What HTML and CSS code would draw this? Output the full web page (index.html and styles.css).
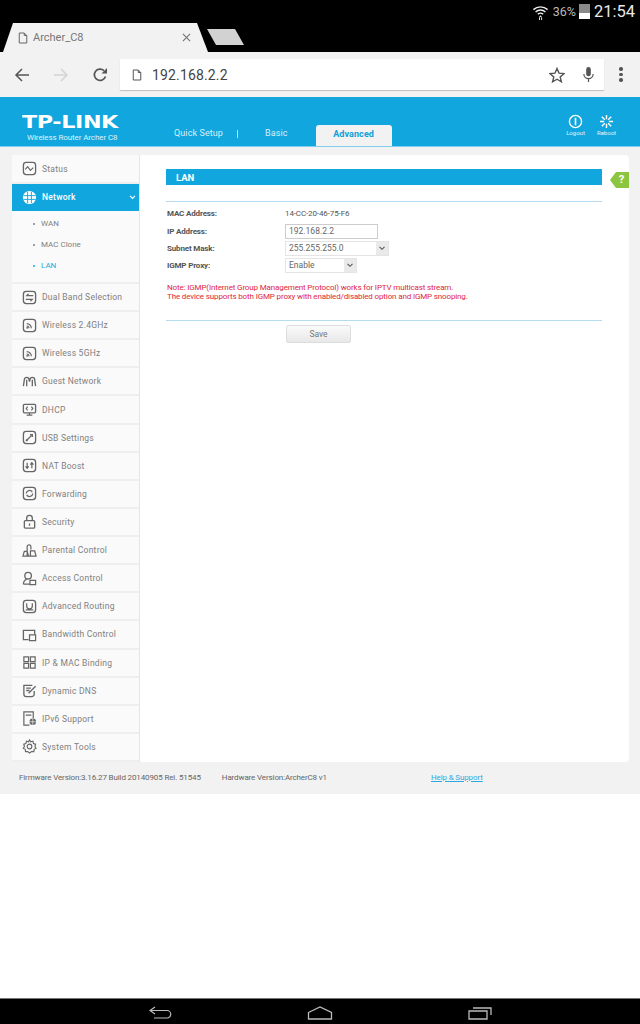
FILE: index.html
```html
<!DOCTYPE html>
<html lang="en">
<head>
<meta charset="utf-8">
<title>Archer_C8</title>
<link rel="stylesheet" href="styles.css">
</head>
<body>
<svg class="defs" width="0" height="0" aria-hidden="true">
  <symbol id="box" viewBox="0 0 16 16"><rect x="1.5" y="1.5" width="13" height="13" rx="3" fill="none" stroke="currentColor" stroke-width="1.4"/></symbol>
</svg>
<div class="phone">
  <header class="chrome-top">
    <div class="status">
      <svg class="wifi" viewBox="0 0 18 18" width="17" height="18"><path d="M1.5 6.500a11 11 0 0 1 15 0M3.800 9a7.600 7.600 0 0 1 10.400 0M6.200 11.400a4 4 0 0 1 5.600 0" fill="none" stroke="#eee" stroke-width="1.500"/><path d="M9 12.500l1.500 1.700H7.500zM7.400 14.500v3h1v-3zM9.700 14.500v3h1v-3z" fill="#eee"/></svg>
      <span class="pct">36%</span>
      <span class="batt"><span class="batt-fill"></span></span>
      <span class="clock">21:54</span>
    </div>
    <div class="tabs">
      <div class="tab">
        <svg class="doc" viewBox="0 0 12 14" width="10" height="12"><path d="M1.500 1h6l3 3v9h-9zM7.500 1v3h3" fill="none" stroke="#666" stroke-width="1.200"/></svg>
        <span class="tab-title">Archer_C8</span>
        <svg class="tab-x" viewBox="0 0 10 10" width="9" height="9"><path d="M1 1l8 8M9 1l-8 8" stroke="#777" stroke-width="1.300"/></svg>
      </div>
      <div class="newtab"></div>
    </div>
  </header>

  <div class="toolbar">
    <svg class="tb-ic" viewBox="0 0 16 16" width="16" height="16"><path d="M15 8H2M8 2L2 8l6 6" fill="none" stroke="#555" stroke-width="1.500"/></svg>
    <svg class="tb-ic" viewBox="0 0 16 16" width="16" height="16"><path d="M1 8h13M8 2l6 6-6 6" fill="none" stroke="#d4d4d4" stroke-width="1.500"/></svg>
    <svg class="tb-ic" viewBox="0 0 16 16" width="16" height="16"><path d="M13.500 9.500A5.700 5.700 0 1 1 12 3.600" fill="none" stroke="#555" stroke-width="1.700"/><path d="M9.500 6.500h5.500v-5.500z" fill="#555"/></svg>
    <div class="omnibox">
      <svg viewBox="0 0 12 14" width="10" height="12"><path d="M1.500 1h6l3 3v9h-9zM7.500 1v3h3" fill="none" stroke="#555" stroke-width="1.200"/></svg>
      <span class="url">192.168.2.2</span>
      <svg class="star" viewBox="0 0 16 16" width="16" height="16"><path d="M8 1.500l2 4.600 5 .5-3.800 3.300 1.200 4.900L8 12.200l-4.400 2.600 1.200-4.900L1 6.600l5-.5z" fill="none" stroke="#555" stroke-width="1.400"/></svg>
      <svg class="mic" viewBox="0 0 14 18" width="13" height="17"><rect x="4.500" y="1" width="5" height="10" rx="2.500" fill="#555"/><path d="M2 8.500a5 5 0 0 0 10 0M7 13.500V17" fill="none" stroke="#555" stroke-width="1.300"/></svg>
    </div>
    <div class="menu-dots"><i></i><i></i><i></i></div>
  </div>

  <div class="page">
    <div class="rt-head">
      <div class="brand">
        <span class="logo">TP-LINK</span>
        <span class="model">Wireless Router Archer C8</span>
      </div>
      <nav class="rt-tabs">
        <span class="rt-tab">Quick Setup</span>
        <span class="rt-sep"></span>
        <span class="rt-tab basic">Basic</span>
        <span class="rt-tab active">Advanced</span>
      </nav>
      <div class="rt-actions">
        <div class="rt-act">
          <svg viewBox="0 0 16 16" width="15" height="15"><circle cx="8" cy="8" r="6.500" fill="none" stroke="#fff" stroke-width="1.500"/><path d="M8 4v8" stroke="#fff" stroke-width="1.700"/></svg>
          <span>Logout</span>
        </div>
        <div class="rt-act">
          <svg viewBox="0 0 16 16" width="15" height="15"><path d="M8 1v4.500M8 10.500V15M1 8h4.500M10.500 8H15M3 3l3.200 3.200M9.800 9.800L13 13M13 3L9.800 6.200M6.200 9.800L3 13" stroke="#fff" stroke-width="1.500"/></svg>
          <span>Reboot</span>
        </div>
      </div>
    </div>

    <div class="rt-body">
      <aside class="side">
        <div class="item first">
          <svg class="ic" viewBox="0 0 16 16"><use href="#box"/><path d="M3.500 9l2.500-3 3 4 3-3" fill="none" stroke="currentColor" stroke-width="1.200"/></svg>
          <span>Status</span>
        </div>
        <div class="item on">
          <svg class="ic" viewBox="0 0 16 16"><circle cx="8" cy="8" r="7" fill="#fff"/><path d="M1.500 6h13M1.500 10h13M6 2v12M10 2v12" stroke="#11a6de" stroke-width="1"/></svg>
          <span>Network</span>
          <svg class="chev" viewBox="0 0 8 6" width="7" height="5"><path d="M1 1l3 3 3-3" fill="none" stroke="#fff" stroke-width="1.500"/></svg>
        </div>
        <ul class="sub">
          <li>WAN</li>
          <li>MAC Clone</li>
          <li class="cur">LAN</li>
        </ul>
        <div class="rows">
          <div class="item">
            <svg class="ic" viewBox="0 0 16 16"><use href="#box"/><path d="M12 6H5l2-2M4 10h7l-2 2" fill="none" stroke="currentColor" stroke-width="1.200"/></svg>
            <span>Dual Band Selection</span>
          </div>
          <div class="item">
            <svg class="ic" viewBox="0 0 16 16"><use href="#box"/><path d="M5 6a5 5 0 0 1 5 5M5 8.500A2.500 2.500 0 0 1 7.500 11" fill="none" stroke="currentColor" stroke-width="1.200"/><circle cx="5.500" cy="10.500" r="1" fill="currentColor"/></svg>
            <span>Wireless 2.4GHz</span>
          </div>
          <div class="item">
            <svg class="ic" viewBox="0 0 16 16"><use href="#box"/><path d="M5 6a5 5 0 0 1 5 5M5 8.500A2.500 2.500 0 0 1 7.500 11" fill="none" stroke="currentColor" stroke-width="1.200"/><circle cx="5.500" cy="10.500" r="1" fill="currentColor"/></svg>
            <span>Wireless 5GHz</span>
          </div>
          <div class="item">
            <svg class="ic" viewBox="0 0 16 16"><path d="M1.500 13l1-7a2.500 2.500 0 0 1 5 0l.5 2 .5-2a2.500 2.500 0 0 1 5 0l1 7M5 6v7M11 6v7" fill="none" stroke="currentColor" stroke-width="1.400"/></svg>
            <span>Guest Network</span>
          </div>
          <div class="item">
            <svg class="ic" viewBox="0 0 16 16"><rect x="1.500" y="2.500" width="13" height="9" rx="1" fill="none" stroke="currentColor" stroke-width="1.400"/><path d="M5 14h6M8 11.500V14M6 5L4.500 7 6 9M10 5l1.500 2L10 9" fill="none" stroke="currentColor" stroke-width="1.200"/></svg>
            <span>DHCP</span>
          </div>
          <div class="item">
            <svg class="ic" viewBox="0 0 16 16"><use href="#box"/><path d="M5 11l5-5M8.500 5H11v2.500" fill="none" stroke="currentColor" stroke-width="1.400"/><circle cx="5" cy="11" r="1.200" fill="currentColor"/></svg>
            <span>USB Settings</span>
          </div>
          <div class="item">
            <svg class="ic" viewBox="0 0 16 16"><use href="#box"/><path d="M5.500 5v6M3.800 9l1.700 2 1.700-2M10.500 11V5M8.800 7l1.700-2 1.700 2" fill="none" stroke="currentColor" stroke-width="1.300"/></svg>
            <span>NAT Boost</span>
          </div>
          <div class="item">
            <svg class="ic" viewBox="0 0 16 16"><use href="#box"/><path d="M4.500 8A3.500 3.500 0 0 1 11 6.500M11.500 8A3.500 3.500 0 0 1 5 9.500" fill="none" stroke="currentColor" stroke-width="1.300"/></svg>
            <span>Forwarding</span>
          </div>
          <div class="item">
            <svg class="ic" viewBox="0 0 16 16"><rect x="2.500" y="7" width="11" height="8" rx="1" fill="none" stroke="currentColor" stroke-width="1.400"/><path d="M5 7V4.500a3 3 0 0 1 6 0V7M8 10v2.500" fill="none" stroke="currentColor" stroke-width="1.400"/></svg>
            <span>Security</span>
          </div>
          <div class="item">
            <svg class="ic" viewBox="0 0 16 16"><path d="M1 14l1.500-5h3L7 14zM5.500 14V4a2 2 0 0 1 4 0v3M9 14V8.500h4.500L15 14zM1 14h14" fill="none" stroke="currentColor" stroke-width="1.300"/></svg>
            <span>Parental Control</span>
          </div>
          <div class="item">
            <svg class="ic" viewBox="0 0 16 16"><circle cx="6.500" cy="5" r="3.500" fill="none" stroke="currentColor" stroke-width="1.400"/><path d="M1.500 14c0-3 2-4.500 3.500-5M8 14H1.500M8.500 10h6v4.500h-6z" fill="none" stroke="currentColor" stroke-width="1.300"/></svg>
            <span>Access Control</span>
          </div>
          <div class="item">
            <svg class="ic" viewBox="0 0 16 16"><use href="#box"/><path d="M5 4.500v3a3 3 0 0 0 6 0v-3M4 11.500h8" fill="none" stroke="currentColor" stroke-width="1.300"/></svg>
            <span>Advanced Routing</span>
          </div>
          <div class="item">
            <svg class="ic" viewBox="0 0 16 16"><path d="M7 13.500H1.500v-10h12V8" fill="none" stroke="currentColor" stroke-width="1.400"/><path d="M8 8.500h6.500v6H8z" fill="none" stroke="currentColor" stroke-width="1.300"/></svg>
            <span>Bandwidth Control</span>
          </div>
          <div class="item">
            <svg class="ic" viewBox="0 0 16 16"><path d="M2 2h5v5H2zM9 2h5v5H9zM2 9h5v5H2zM9 9h5v5H9z" fill="none" stroke="currentColor" stroke-width="1.300"/></svg>
            <span>IP &amp; MAC Binding</span>
          </div>
          <div class="item">
            <svg class="ic" viewBox="0 0 16 16"><path d="M13 8.500v3.500a2.500 2.500 0 0 1-2.500 2.500H4.500A2.500 2.500 0 0 1 2 12V2.500h9M4.500 5.500h5M4.500 8h3.500M7 11l7.500-7.500" fill="none" stroke="currentColor" stroke-width="1.400"/></svg>
            <span>Dynamic DNS</span>
          </div>
          <div class="item">
            <svg class="ic" viewBox="0 0 16 16"><path d="M8 15H2V1h10v7M4 4.500h6" fill="none" stroke="currentColor" stroke-width="1.300"/><circle cx="11.500" cy="11.500" r="3.500" fill="currentColor"/><path d="M8 11.500h7M11.500 8v7" stroke="#fafafa" stroke-width=".7"/></svg>
            <span>IPv6 Support</span>
          </div>
          <div class="item">
            <svg class="ic" viewBox="0 0 16 16"><path d="M8 1l1.400 2 2.300-.6.500 2.400 2.300.7-.7 2.500 1.200 2-2 1-.4 2.500-2.400-.2L8 15l-1.800-1.700-2.400.2-.4-2.500-2-1 1.200-2-.7-2.500 2.300-.7.500-2.400 2.300.6z" fill="none" stroke="currentColor" stroke-width="1.200"/><circle cx="8" cy="8" r="2.500" fill="none" stroke="currentColor" stroke-width="1.200"/></svg>
            <span>System Tools</span>
          </div>
        </div>
      </aside>

      <main class="content">
        <div class="title-row">
          <h1 class="title">LAN</h1>
          <div class="help">?</div>
        </div>
        <div class="rule top"></div>
        <div class="form">
          <div class="frow mac"><label>MAC Address:</label><span class="val">14-CC-20-46-75-F6</span></div>
          <div class="frow"><label>IP Address:</label><span class="input">192.168.2.2</span></div>
          <div class="frow"><label>Subnet Mask:</label><span class="select wide">255.255.255.0<b class="sel-btn"><svg viewBox="0 0 8 6" width="8" height="5"><path d="M1 1l3 3 3-3" fill="none" stroke="#555" stroke-width="1.300"/></svg></b></span></div>
          <div class="frow"><label>IGMP Proxy:</label><span class="select narrow">Enable<b class="sel-btn"><svg viewBox="0 0 8 6" width="8" height="5"><path d="M1 1l3 3 3-3" fill="none" stroke="#555" stroke-width="1.300"/></svg></b></span></div>
        </div>
        <p class="note">Note: IGMP(Internet Group Management Protocol) works for IPTV multicast stream.<br>The device supports both IGMP proxy with enabled/disabled option and IGMP snooping.</p>
        <div class="rule bottom"></div>
        <div class="actions"><span class="save">Save</span></div>
      </main>
    </div>

    <footer class="rt-foot">
      <span class="fw">Firmware Version:3.16.27 Build 20140905 Rel. 51545</span>
      <span class="hw">Hardware Version:ArcherC8 v1</span>
      <a class="support" href="#">Help &amp; Support</a>
    </footer>
  </div>

  <div class="blank"></div>

  <div class="navbar">
    <svg viewBox="0 0 24 14" width="24" height="14"><path d="M7 1L2 4.500 7 8M2 4.500h17a3.500 3.500 0 0 1 0 7.500H6" fill="none" stroke="#bbb" stroke-width="1.200"/></svg>
    <svg viewBox="0 0 26 14" width="26" height="14"><path d="M1.500 6.500L13 1l11.500 5.500V13h-23z" fill="none" stroke="#bbb" stroke-width="1.300"/></svg>
    <svg viewBox="0 0 24 14" width="24" height="14"><path d="M1 5h18v8H1z" fill="none" stroke="#bbb" stroke-width="1.300"/><path d="M5 2h18v7" fill="none" stroke="#bbb" stroke-width="1.300"/></svg>
  </div>
</div>
</body>
</html>
```

FILE: styles.css
```css
* { box-sizing: border-box; }
html, body { margin: 0; padding: 0; }
body { font-family: Roboto, "Liberation Sans", sans-serif; background: #fff; }
.defs { display: block; height: 0; }
.phone { width: 640px; height: 1024px; display: flex; flex-direction: column; overflow: hidden; }

.chrome-top { height: 52px; background: #000; display: flex; flex-direction: column; }
.status { height: 23px; display: flex; align-items: center; justify-content: flex-end; padding-right: 5px; color: #ddd; }
.wifi { margin-right: 4px; margin-top: 1px; }
.pct { font-size: 12.500px; color: #bbb; margin-right: 3px; }
.batt { width: 11px; height: 15px; background: #8a8a8a; position: relative; margin-right: 4px; }
.batt-fill { position: absolute; left: 0; right: 0; bottom: 0; height: 6px; background: #fff; }
.clock { font-size: 16.500px; color: #e8e8e8; }
.tabs { height: 29px; display: flex; align-items: flex-start; padding-left: 3px; }
.tab { width: 205px; height: 29px; background: #f2f2f2; clip-path: polygon(0 100%, 10px 0, 194px 0, 205px 100%); display: flex; align-items: center; padding: 0 17px 0 15px; }
.tab-title { font-size: 11px; color: #777; margin-left: 5px; flex: 1; }
.newtab { width: 37px; height: 16px; margin-top: 6px; margin-left: -1px; background: #d2d2d2; clip-path: polygon(0 0, 28px 0, 37px 100%, 9px 100%); }

.toolbar { height: 45px; background: #f2f2f2; display: flex; align-items: center; padding: 0 12px 0 14px; }
.tb-ic { margin-right: 23px; }
.tb-ic:nth-child(3) { margin-right: 12px; }
.omnibox { width: 484px; height: 31px; background: #fff; box-shadow: 0 1px 1px #bdbdbd; border-radius: 1px; display: flex; align-items: center; padding: 0 7px 0 12px; }
.url { font-size: 14px; color: #444; margin-left: 10px; flex: 1; letter-spacing: .15px; }
.mic { margin-left: 17px; margin-right: 2px; }
.menu-dots { margin-left: 15px; display: flex; flex-direction: column; gap: 2px; }
.menu-dots i { width: 3.500px; height: 3.500px; border-radius: 50%; background: #555; display: block; }

.page { background: #f2f2f2; height: 697px; display: flex; flex-direction: column; }
.rt-head { height: 50px; background: #11a6de; border-bottom: 1px solid #7fd0ee; display: flex; position: relative; padding-left: 22px; }
.brand { width: 152px; padding-top: 17px; display: flex; flex-direction: column; }
.logo { font-family: "DejaVu Sans", sans-serif; font-weight: 700; font-size: 17px; line-height: 16px; color: #fff; letter-spacing: -.3px; transform: scaleX(1.310); transform-origin: left center; }
.model { font-size: 8px; line-height: 10px; color: #dff3fb; margin-left: 5px; margin-top: 3px; letter-spacing: -.1px; }
.rt-tabs { display: flex; align-items: flex-end; font-size: 9px; color: #d8f0fa; }
.rt-tab { padding-bottom: 7px; line-height: 11px; letter-spacing: .1px; }
.rt-sep { width: 1px; height: 8px; background: #bfe7f6; margin: 0 0 8px 14px; }
.basic { margin-left: 27px; }
.active { margin-left: 28px; width: 76px; height: 21px; padding: 4px 0 0; line-height: 11px; text-align: center; background: #f2f2f2; color: #11a0d8; font-weight: 700; border-radius: 3px 3px 0 0; }
.rt-actions { margin-left: auto; padding: 17px 23px 0 0; display: flex; gap: 10px; }
.rt-act { display: flex; flex-direction: column; align-items: center; width: 21px; font-size: 6px; color: #e4f5fb; line-height: 7px; }

.rt-body { display: flex; margin: 8px 11px 0 12px; height: 607px; background: #fff; border-radius: 0 4px 4px 0; }
.side { width: 128px; height: 607px; display: flex; flex-direction: column; background: #fafafa; border-right: 1px solid #e6e6e6; color: #808080; }
.item { display: flex; align-items: center; padding-left: 10px; font-size: 8.500px; letter-spacing: .25px; border-bottom: 2px solid #efefef; min-height: 0; }
.item.first { height: 29px; }
.item.on { height: 27px; padding-bottom: 1px; background: #11a6de; color: #fff; font-weight: 500; border-bottom: 0; }
.ic { width: 15px; height: 15px; margin-right: 5px; flex: none; color: #666; }
.chev { margin-left: auto; margin-right: 3px; }
.sub { list-style: none; margin: 0; padding: 2px 0 0 21px; height: 73px; border-bottom: 2px solid #efefef; font-size: 8px; color: #808080; }
.sub li { height: 21px; line-height: 21px; display: flex; align-items: center; gap: 6px; }
.sub li::before { content: ""; width: 2px; height: 2px; border-radius: 50%; background: currentColor; }
.sub .cur { color: #2aa7de; }
.rows { flex: 1; display: grid; grid-auto-rows: 1fr; min-height: 0; }

.content { flex: 1; padding: 14px 0 0 26px; position: relative; }
.title-row { width: 436px; }
.title { margin: 0; height: 16px; line-height: 17px; background: #11a6de; color: #fff; font-size: 9.500px; font-weight: 700; padding-left: 10px; }
.help { position: absolute; right: 0; top: 17px; width: 19px; height: 16px; background: #8cc63f; color: #fff; font-weight: 700; font-size: 11px; line-height: 16px; text-align: center; padding-left: 4px; clip-path: polygon(0 50%, 6px 0, 100% 0, 100% 100%, 6px 100%); }
.rule { width: 436px; height: 1px; background: #b5dcef; }
.rule.top { margin-top: 16px; }
.form { padding: 3px 0 0 1px; font-size: 8px; color: #555; }
.frow { display: flex; align-items: center; height: 17px; }
.frow label { width: 118px; font-weight: 700; letter-spacing: -.15px; color: #555; }
.val { letter-spacing: -.12px; }
.mac { height: 16px; margin-bottom: 2px; }
.input, .select { display: block; height: 15px; background: #fff; border: 1px solid #ccc; font-size: 8.500px; line-height: 13px; padding-left: 3px; position: relative; color: #666; }
.input { width: 93px; }
.select { border-color: #e4e4e4; }
.select.wide { width: 104px; }
.select.narrow { width: 72px; }
.sel-btn { position: absolute; right: 0; top: 0; bottom: 0; width: 12px; background: #eaeaea; display: flex; align-items: center; justify-content: center; }
.note { margin: 9px 0 0 1px; font-size: 8px; line-height: 9px; color: #e0263c; letter-spacing: -.14px; }
.rule.bottom { margin-top: 19px; }
.actions { padding: 4px 0 0 120px; }
.save { display: block; width: 65px; height: 18px; line-height: 16px; text-align: center; font-size: 8.500px; color: #777; border: 1px solid #ddd; border-radius: 2px; background: linear-gradient(#fafafa, #e8e8e8); }

.rt-foot { flex: 1; display: flex; align-items: center; padding: 0 0 2px 19px; font-size: 8px; color: #666; letter-spacing: -.13px; }
.hw { margin-left: 21px; }
.support { margin-left: 104px; color: #29abe2; text-decoration: underline; margin-top: 1px; }

.blank { flex: 1; background: #fff; }
.navbar { height: 26px; background: #000; border-top: 1px solid #777; display: flex; align-items: center; justify-content: space-between; padding: 2px 148px 0 148px; }
```
